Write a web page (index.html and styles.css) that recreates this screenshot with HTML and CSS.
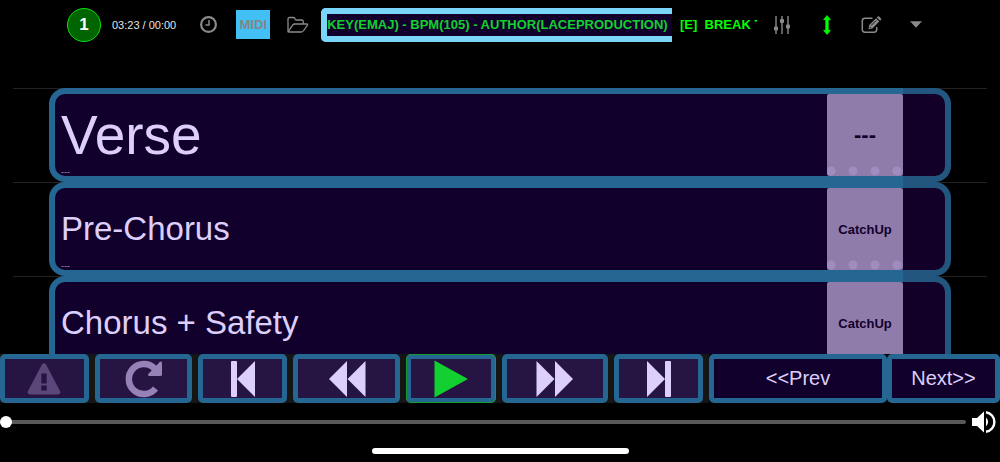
FILE: index.html
```html
<!DOCTYPE html>
<html lang="en">

<head>
    <meta charset="UTF-8">
    <meta name="viewport" content="width=device-width, initial-scale=1.0">
    <title>Player</title>
    <link rel="stylesheet" href="styles.css">
</head>

<body>
    <header class="topbar">
        <button class="count">1</button>
        <span class="time">03:23 / 00:00</span>
        <button class="icon clock" aria-label="Clock">
            <svg width="19" height="19" viewBox="0 0 19 19" fill="none" stroke="#8a8a8a">
                <circle cx="9.5" cy="9.5" r="7.4" stroke-width="2.2"/>
                <path d="M10 5v5H6.5" stroke-width="1.5"/>
            </svg>
        </button>
        <button class="midi">MIDI</button>
        <button class="icon folder" aria-label="Open">
            <svg width="23" height="18" viewBox="0 0 23 18" fill="none" stroke="#8a8a8a" stroke-width="1.3" stroke-linejoin="round">
                <path d="M2 15.5V3q0-1.5 1.5-1.5h4q1.5 0 1.5 1.3t1.5 1.2h5q1.8 0 1.8 1.8V8"/>
                <path d="M2 15.8 6.6 9.2Q7.4 8 8.8 8H20.5q1.7 0 .8 1.4l-3.6 5.1q-1 1.5-2.500 1.500H3q-1 0-1-.5z"/>
            </svg>
        </button>
        <div class="title">KEY(EMAJ) - BPM(105) - AUTHOR(LACEPRODUCTION)</div>
        <div class="next_title">[E]&nbsp; BREAK T</div>
        <button class="icon mixer" aria-label="Mixer">
            <svg width="18" height="20" viewBox="0 0 18 20" fill="#8a8a8a">
                <path d="M2.300 1h1.400v18H2.300zM8.300 1h1.400v18H8.300zM14.300 1h1.400v18h-1.400z"/>
                <rect x="1" y="11.500" width="4" height="4" rx="1"/>
                <rect x="7" y="4" width="4" height="4" rx="1"/>
                <rect x="13" y="9.500" width="4" height="4" rx="1"/>
            </svg>
        </button>
        <button class="icon arrows" aria-label="Scroll">
            <svg width="8" height="20" viewBox="0 0 8 20" fill="#00ff00" stroke="#00ff00" stroke-width=".6" stroke-linejoin="round">
                <path d="M4 .4l3.500 4.300H5.300v10.600h2.200L4 19.600.5 15.300h2.200V4.700H.5z"/>
            </svg>
        </button>
        <button class="icon edit" aria-label="Edit">
            <svg width="21" height="18" viewBox="0 0 21 18">
                <path d="M11.500 2.200H4q-2.700 0-2.700 2.700v8.600q0 2.700 2.700 2.700h9q2.700 0 2.700-2.700V11" fill="none" stroke="#8a8a8a" stroke-width="1.500"/>
                <path d="M7.500 13.200l.5-4 7-7 3.300 3.300-7 7zM15.800 1.500l.9-.9q.7-.6 1.400 0L20 2.500q.6.700 0 1.300l-.9.900z" fill="#8a8a8a"/>
                <path d="M10 9.600l5-5" stroke="#000" stroke-width=".8"/>
                <path d="M8.500 10.800l1.300 1.300" stroke="#000" stroke-width=".9"/>
            </svg>
        </button>
        <button class="icon caret" aria-label="More">
            <svg width="12" height="7" viewBox="0 0 12 7" fill="#8a8a8a"><path d="M0 .3h12L6 6.800z"/></svg>
        </button>
    </header>

    <ul class="list">
        <li>
            <div class="card">
                <div class="name big">Verse</div>
                <div class="note">---</div>
                <button class="action dashes">---</button>
            </div>
        </li>
        <li>
            <div class="card">
                <div class="name">Pre-Chorus</div>
                <div class="note">---</div>
                <button class="action">CatchUp</button>
            </div>
        </li>
        <li>
            <div class="card">
                <div class="name">Chorus + Safety</div>
                <button class="action">CatchUp</button>
            </div>
        </li>
    </ul>

    <div class="transport">
        <div class="controls">
            <button aria-label="Panic">
                <svg width="34" height="32" viewBox="0 0 34 32">
                    <path d="M14.800 1.700q2.200-2.800 4.400 0L33 28q1.300 3.200-2 3.500H3Q-.3 31.200 1 28z" fill="#5b4779"/>
                    <path d="M14.300 10.500h5.400v10h-5.400zM14.300 22.500h5.400v5h-5.400z" fill="#261443"/>
                </svg>
            </button>
            <button aria-label="Restart">
                <svg width="38" height="38" viewBox="0 0 38 38">
                    <path d="M30.500 28.500A15 15 0 1 1 29.500 8.500" fill="none" stroke="#9682b6" stroke-width="6.500"/>
                    <path d="M37 2.800V14.500q0 1.500-1.500 1.500H24.300q-2-.6-.8-2.300L34.700 2q2-1.200 2.300.8z" fill="#9682b6"/>
                </svg>
            </button>
            <button aria-label="First">
                <svg width="26" height="38" viewBox="0 0 26 38" fill="#dccffb">
                    <rect x="1" y="1" width="6" height="36" rx="1"/>
                    <path d="M25 1v36L7 19z"/>
                </svg>
            </button>
            <button aria-label="Rewind">
                <svg width="38" height="38" viewBox="0 0 38 38" fill="#dccffb">
                    <path d="M19 1v36L1 19zM37.500 1v36l-18-18z"/>
                </svg>
            </button>
            <button class="play" aria-label="Play">
                <svg width="34" height="38" viewBox="0 0 34 38" fill="#11d02f"><path d="M.5.500v37L34 19z"/></svg>
            </button>
            <button aria-label="Forward">
                <svg width="38" height="38" viewBox="0 0 38 38" fill="#dccffb">
                    <path d="M.5 1v36l18-18zM19 1v36l18-18z"/>
                </svg>
            </button>
            <button aria-label="Last">
                <svg width="26" height="38" viewBox="0 0 26 38" fill="#dccffb">
                    <path d="M1 1v36l18-18z"/>
                    <rect x="19" y="1" width="6" height="36" rx="1"/>
                </svg>
            </button>
        </div>
        <div class="pages">
            <button class="prev">&lt;&lt;Prev</button>
            <button class="next">Next&gt;&gt;</button>
        </div>
    </div>

    <div class="seek">
        <input type="range" min="0" max="100" value="0" aria-label="Position">
        <button class="icon volume" aria-label="Volume">
            <svg width="24" height="24" viewBox="0 0 24 24" fill="#fff">
                <path d="M0 8h5l7-6.500v21L5 16H0z"/>
                <path d="M14 7.500q4.200 4.500 0 9z"/>
                <path d="M14 2.300a9.800 9.800 0 0 1 0 19.400" fill="none" stroke="#fff" stroke-width="2.400"/>
            </svg>
        </button>
    </div>
    <div class="home"></div>
</body>

</html>
```
FILE: styles.css
```css
* {
    box-sizing: border-box;
}

body {
    margin: 0;
    height: 100vh;
    display: flex;
    flex-direction: column;
    overflow: hidden;
    background-color: black;
    font-family: "Liberation Sans", Arial, sans-serif;
}

button {
    margin: 0;
    padding: 0;
    border: 0;
    background: none;
    font-family: inherit;
    cursor: pointer;
}

svg {
    display: block;
}

.topbar {
    height: 49px;
    display: flex;
    align-items: center;
    padding: 0 78px 0 67px;
}

.topbar > * {
    flex: none;
}

.count {
    width: 34px;
    height: 34px;
    border: 1px solid #0bdc0b;
    border-radius: 50%;
    background-color: #006400;
    color: white;
    font-size: 17px;
    font-weight: bold;
}

.time {
    margin-left: 11px;
    color: #e4e4e4;
    font-size: 11px;
}

.clock {
    margin-left: 23px;
}

.midi {
    width: 34px;
    height: 29px;
    margin-left: 18px;
    background-color: #42bff5;
    color: #858585;
    font-size: 13px;
    font-weight: bold;
}

.folder {
    margin-left: 16px;
}

.topbar .title {
    flex: 1 1 0;
    min-width: 0;
    margin-left: 12px;
    border: 6px solid #7bd5f9;
    border-right: 0;
    border-radius: 5px 0 0 5px;
    background-color: #12002c;
    color: #11d02f;
    font-size: 13px;
    font-weight: bold;
    line-height: 22px;
    white-space: nowrap;
    overflow: hidden;
}

.next_title {
    width: 77px;
    margin-left: 8px;
    color: #00ff00;
    font-size: 13px;
    font-weight: bold;
    line-height: 22px;
    white-space: nowrap;
    overflow: hidden;
}

.mixer {
    margin-left: 16px;
}

.arrows {
    margin-left: 32px;
}

.edit {
    margin-left: 30px;
}

.caret {
    margin-left: 28px;
}

.list {
    flex: 1;
    min-height: 0;
    margin: 0;
    padding: 39px 13px 0;
    list-style: none;
    overflow: hidden;
}

.list li {
    height: 94px;
    border-top: 1px solid #222;
}

.card {
    position: relative;
    height: 94px;
    margin: -1px 36px 0;
    padding: 0 42px 0 6px;
    display: grid;
    grid-template-columns: 1fr 76px;
    grid-template-rows: 1fr 8px;
    border: 6px solid #256692;
    border-radius: 16px;
    background-color: #12002c;
    color: #dccffb;
}

/* shaded strip at the right end of the card */
.card::after {
    content: "";
    position: absolute;
    top: -6px;
    right: -6px;
    bottom: -6px;
    width: 48px;
    border-radius: 0 16px 16px 0;
    background-color: rgba(24, 0, 20, 0.15);
}

.name {
    padding-top: 8px;
    align-self: center;
    font-size: 33px;
    line-height: 60px;
}

.name.big {
    font-size: 55px;
}

.note {
    grid-row: 2;
    font-size: 9px;
    line-height: 8px;
    color: #a294c0;
}

.action {
    grid-column: 2;
    grid-row: 1 / 3;
    border-radius: 2px;
    background: radial-gradient(circle, #a08dc0 4px, transparent 5px) -7px 100% / 22px 10px repeat-x #8f7cab;
    color: #12002c;
    font-size: 13px;
    font-weight: bold;
}

.dashes {
    font-size: 22px;
}

.transport {
    display: flex;
    gap: 6px;
    background-color: #151515;
}

.controls {
    flex: 703;
    display: grid;
    grid-template-columns: 89fr 98fr 89fr 107fr 90fr 107fr 89fr;
    gap: 6px;
}

.pages {
    flex: 291;
    display: grid;
    grid-template-columns: 178fr 113fr;
    background-color: black;
}

.transport button {
    height: 49px;
    display: flex;
    align-items: center;
    justify-content: center;
    border: 5px solid #256692;
    border-radius: 5px;
    background-color: #261443;
}

.transport .play {
    outline: 1px solid #139c2c;
    outline-offset: -1px;
}

.transport .prev,
.transport .next {
    background-color: #12002c;
    color: #dccffb;
    font-size: 20px;
}

.seek {
    height: 37px;
    display: flex;
    align-items: center;
    gap: 6px;
    padding-right: 4px;
}

.seek input {
    flex: 1;
    min-width: 0;
    height: 12px;
    margin: 0;
    appearance: none;
    background: none;
}

.seek input::-webkit-slider-runnable-track {
    height: 4px;
    border-radius: 2px;
    background-color: #595959;
}

.seek input::-webkit-slider-thumb {
    appearance: none;
    width: 12px;
    height: 12px;
    margin-top: -4px;
    border-radius: 50%;
    background-color: white;
}

.home {
    width: 257px;
    height: 6px;
    margin: 8px auto;
    border-radius: 3px;
    background-color: white;
}
```
